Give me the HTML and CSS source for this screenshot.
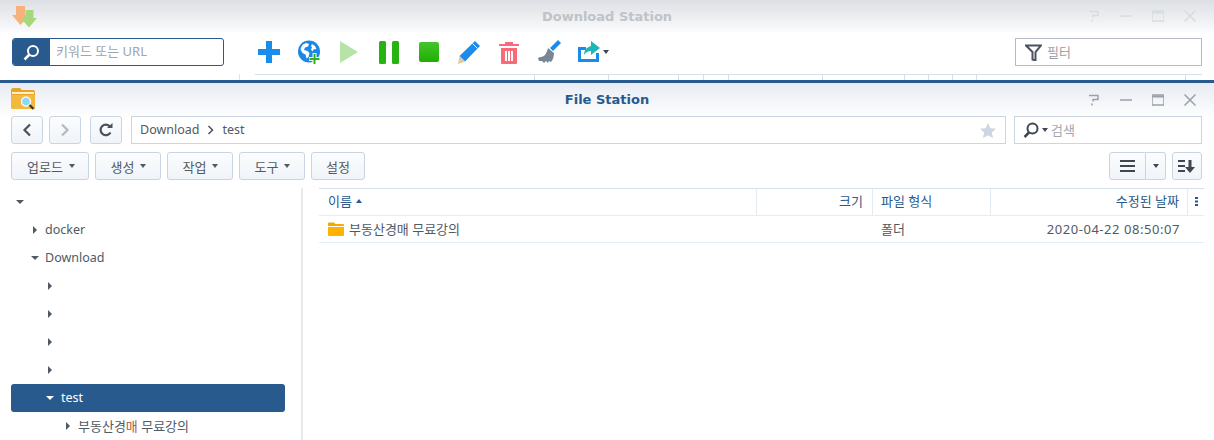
FILE: index.html
```html
<!DOCTYPE html>
<html lang="ko">
<head>
<meta charset="utf-8">
<title>File Station</title>
<link rel="stylesheet" href="styles.css">
</head>
<body>
<section class="ds">
  <header class="titlebar ds-title">
    <svg class="app-icon" width="26" height="23" viewBox="0 0 26 23"><path d="M5 1h9v9h4.500L9.500 20 1 10h4z" fill="#f6b27a"/><path d="M14.500 5h8v8h3.500L18 22.500 9.500 13h5z" fill="#a6d77e"/></svg>
    <span class="title">Download Station</span>
    <div class="winctl faded">
      <svg width="12" height="12" viewBox="0 0 12 12"><path d="M1 1.500h9v4H5v2M4 9.500v2" fill="none" stroke="currentColor" stroke-width="1.500"/></svg>
      <svg width="12" height="12" viewBox="0 0 12 12"><path d="M0 6h12" stroke="currentColor" stroke-width="1.500"/></svg>
      <svg width="12" height="12" viewBox="0 0 12 12"><path d="M0 1h12v10H0z" fill="none" stroke="currentColor" stroke-width="1.500"/><path d="M0 2.500h12" stroke="currentColor" stroke-width="2"/></svg>
      <svg width="12" height="12" viewBox="0 0 12 12"><path d="M.5.500l11 11M11.500.500l-11 11" stroke="currentColor" stroke-width="1.500"/></svg>
    </div>
  </header>
  <div class="ds-toolbar">
    <div class="keyword">
      <span class="keyword-btn">
        <svg width="17" height="17" viewBox="0 0 17 17"><circle cx="10" cy="7" r="5" fill="none" stroke="#fff" stroke-width="2"/><path d="M6.500 10.500L1.500 15.500" stroke="#fff" stroke-width="2.500"/></svg>
      </span>
      <span class="keyword-text">키워드 또는 URL</span>
    </div>
    <div class="tools">
      <span class="tool"><svg width="24" height="24" viewBox="0 0 24 24"><path d="M9 1h6v8h8v6h-8v8H9v-8H1V9h8z" fill="#1a8ceb"/></svg></span>
      <span class="tool"><svg width="24" height="24" viewBox="0 0 24 24"><circle cx="12" cy="11.500" r="11" fill="#1b87e6"/><path d="M6 4.500l3-1.500 3 1-1 2.500-3 1-1 2.500 3.500 1 2 2-1 4-2 1.500-1-4-3-1.500-2-3.500 1-3zM15 4l3 2 1.500 3-3 .5-1 2-1.500-2 1-2-1-1.500z" fill="#fff"/><path d="M15.500 13h4v4h4v4h-4v3h-4v-3h-3.500v-4h3.500z" fill="#fff"/><path d="M16.500 14h2v4h4v2h-4v4h-2v-4h-4v-2h4z" fill="#2fb31a"/></svg></span>
      <span class="tool"><svg width="20" height="24" viewBox="0 0 20 24"><path d="M1 1l18 11L1 23z" fill="#b5e3a8"/></svg></span>
      <span class="tool"><svg width="20" height="23" viewBox="0 0 20 23"><rect x="0" y="0" width="7" height="23" rx="1.500" fill="#26b510"/><rect x="13" y="0" width="7" height="23" rx="1.500" fill="#26b510"/></svg></span>
      <span class="tool"><span class="stop"></span></span>
      <span class="tool"><svg width="24" height="24" viewBox="0 0 24 24"><path d="M18 1l5 5L8 21.500 2.500 16z" fill="#1c8cec"/><path d="M15.500 3.500l5 5" stroke="#fff" stroke-width="1"/><path d="M2.500 16L8 21.500 1 24z" fill="#e0c8a0"/></svg></span>
      <span class="tool"><svg width="20" height="23" viewBox="0 0 20 23"><path d="M0 3h6V1h8v2h6v2H0zM2 7h16v15a1 1 0 0 1-1 1H3a1 1 0 0 1-1-1z" fill="#f96a78"/><path d="M6 10h2v10H6zM9 10h2v10H9zM12 10h2v10h-2z" fill="#fff"/></svg></span>
      <span class="tool"><svg width="24" height="24" viewBox="0 0 24 24"><path d="M21 0l3 3-8 8-3-3z" fill="#1c8cec"/><path d="M11 8l6 5c0 3-1 7-3 9l-2-1-1 2-2-2-2 2-2-2-3 0-1-3 2-1c4 0 6-2 8-9z" fill="#7b8694"/></svg></span>
      <span class="tool"><svg width="24" height="24" viewBox="0 0 24 24"><path d="M1 7h8v3H4v9h15v-6h3v9H1z" fill="#1b8bea"/><path d="M14 1l9 7-9 7v-4c-3 0-5 1-7 4 0-5 3-8 7-9z" fill="#1cb8b8"/></svg><i class="caret dark small"></i></span>
    </div>
    <div class="filter">
      <svg width="17" height="17" viewBox="0 0 17 17"><path d="M1 1.500h15L10.500 8v8.500l-3-1V8z" fill="none" stroke="#4a5260" stroke-width="2"/></svg>
      <span>필터</span>
    </div>
  </div>
  <div class="ds-ticks">
    <span class="tick-stub"></span>
    <div class="ticks">
      <i style="width:280px"></i><i style="width:74px"></i><i style="width:70px"></i><i style="width:25px"></i><i style="width:25px"></i><i style="width:94px"></i><i style="width:82px"></i><i style="width:24px"></i><i style="width:24px"></i><i style="width:24px"></i><i style="width:209px"></i>
    </div>
  </div>
</section>

<section class="fs">
  <header class="titlebar fs-title">
    <svg class="app-icon" width="26" height="23" viewBox="0 0 26 23"><path d="M1 3a2 2 0 0 1 2-2h7l2 2h11a2 2 0 0 1 2 2v16H1z" fill="#e9a526"/><path d="M2 5h22v2H2z" fill="#fbeecb"/><path d="M1 8h24v13a1 1 0 0 1-1 1H2a1 1 0 0 1-1-1z" fill="#f3b93d"/><circle cx="16" cy="14.500" r="4.500" fill="#8bd8f6" stroke="#f6f6f6" stroke-width="1.500"/><path d="M19.500 18l4 4" stroke="#333" stroke-width="2.200"/></svg>
    <span class="title">File Station</span>
    <div class="winctl">
      <svg width="12" height="12" viewBox="0 0 12 12"><path d="M1 1.500h9v4H5v2M4 9.500v2" fill="none" stroke="currentColor" stroke-width="1.500"/></svg>
      <svg width="12" height="12" viewBox="0 0 12 12"><path d="M0 6h12" stroke="currentColor" stroke-width="1.500"/></svg>
      <svg width="12" height="12" viewBox="0 0 12 12"><path d="M0 1h12v10H0z" fill="none" stroke="currentColor" stroke-width="1.500"/><path d="M0 2.500h12" stroke="currentColor" stroke-width="2"/></svg>
      <svg width="12" height="12" viewBox="0 0 12 12"><path d="M.5.500l11 11M11.500.500l-11 11" stroke="currentColor" stroke-width="1.500"/></svg>
    </div>
  </header>

  <div class="navrow">
    <button class="btn square"><svg width="10" height="14" viewBox="0 0 10 14"><path d="M8 1.500L2.500 7 8 12.500" fill="none" stroke="#4a5260" stroke-width="2.200"/></svg></button>
    <button class="btn square"><svg width="10" height="14" viewBox="0 0 10 14"><path d="M2 1.500L7.500 7 2 12.500" fill="none" stroke="#b4bac2" stroke-width="2.200"/></svg></button>
    <button class="btn square refresh"><svg width="14" height="14" viewBox="0 0 14 14"><path d="M11.500 9.500A5.300 5.300 0 1 1 11 3.500" fill="none" stroke="#4a5260" stroke-width="2.200"/><path d="M8 5h5.500V0z" fill="#4a5260"/></svg></button>
    <div class="pathbar">
      <span>Download</span>
      <svg width="7" height="10" viewBox="0 0 7 10"><path d="M1.500 1l4 4-4 4" fill="none" stroke="#4a5260" stroke-width="1.500"/></svg>
      <span>test</span>
      <svg class="star" width="16" height="15" viewBox="0 0 16 15"><path d="M8 0l2.400 5.200 5.600.6-4.200 3.700 1.200 5.500L8 12.200 3 15l1.200-5.500L0 5.800l5.600-.6z" fill="#cdd6e2"/></svg>
    </div>
    <div class="searchbox">
      <svg width="16" height="16" viewBox="0 0 16 16"><circle cx="9.500" cy="6.500" r="5" fill="none" stroke="#3f4753" stroke-width="2"/><path d="M6 10.500L1.500 15" stroke="#3f4753" stroke-width="2.500"/></svg>
      <i class="caret dark small"></i>
      <span>검색</span>
    </div>
  </div>

  <div class="actionrow">
    <button class="btn act w78">업로드<i class="caret small"></i></button>
    <button class="btn act w66">생성<i class="caret small"></i></button>
    <button class="btn act w66">작업<i class="caret small"></i></button>
    <button class="btn act w66">도구<i class="caret small"></i></button>
    <button class="btn act w54">설정</button>
    <div class="splitbtn">
      <button class="btn seg-main"><svg width="15" height="12" viewBox="0 0 15 12"><path d="M0 1h15M0 6h15M0 11h15" stroke="#3f4753" stroke-width="2"/></svg></button>
      <button class="btn seg-caret"><i class="caret dark small"></i></button>
    </div>
    <button class="btn sortbtn"><svg width="18" height="13" viewBox="0 0 18 13"><path d="M0 1h7M0 6h7M0 11h7" stroke="#3f4753" stroke-width="2"/><path d="M10.500 0h3v7H17l-5 6-5-6h3.500z" fill="#3f4753"/></svg></button>
  </div>

  <div class="content">
    <nav class="tree">
      <div class="node lv0"><i class="tri down"></i></div>
      <div class="node lv1"><i class="tri right"></i><span class="latin">docker</span></div>
      <div class="node lv1 open"><i class="tri down"></i><span class="latin">Download</span></div>
      <div class="node lv2"><i class="tri right"></i></div>
      <div class="node lv2"><i class="tri right"></i></div>
      <div class="node lv2"><i class="tri right"></i></div>
      <div class="node lv2"><i class="tri right"></i></div>
      <div class="node lv2 selected"><i class="tri down"></i><span class="latin">test</span></div>
      <div class="node lv3"><i class="tri right"></i><span>부동산경<b class="red">매</b> 무료강의</span></div>
    </nav>
    <div class="grid">
      <div class="grid-head">
        <div class="cell c-name">이름<i class="sort-up"></i></div>
        <div class="cell c-size">크기</div>
        <div class="cell c-type">파일 형식</div>
        <div class="cell c-date">수정된 날짜</div>
        <div class="cell c-more"><svg width="3" height="9" viewBox="0 0 3 9"><path d="M0 0h3v2H0zM0 3.500h3v2H0zM0 7h3v2H0z" fill="#285a8e"/></svg></div>
      </div>
      <div class="grid-row">
        <div class="cell c-name"><svg class="folder" width="16" height="14" viewBox="0 0 16 14"><path d="M0 1.500A1 1 0 0 1 1 .5h5l1.500 1.500H15a1 1 0 0 1 1 1V4H0z" fill="#f7a900"/><path d="M0 5h16v8a1 1 0 0 1-1 1H1a1 1 0 0 1-1-1z" fill="#ffb300"/></svg><span class="up">부동산경매 무료강의</span></div>
        <div class="cell c-size"></div>
        <div class="cell c-type"><span class="up1">폴더</span></div>
        <div class="cell c-date date-value">2020-04-22 08:50:07</div>
        <div class="cell c-more"></div>
      </div>
    </div>
  </div>
</section>
</body>
</html>
```
FILE: styles.css
```css
* { box-sizing: border-box; }
html, body { margin: 0; padding: 0; }
body {
  width: 1214px;
  height: 440px;
  overflow: hidden;
  background: #fff;
  font-family: "Noto Sans", "Noto Sans CJK KR", sans-serif;
  font-size: 13px;
  color: #505a64;
}
button { font: inherit; color: inherit; padding: 0; }
.latin { font-size: 12.500px; }

.titlebar {
  position: relative;
  display: flex;
  align-items: center;
  justify-content: center;
}
.app-icon { position: absolute; left: 11px; }
.title {
  font-family: "DejaVu Sans", sans-serif;
  font-weight: 700;
  font-size: 13px;
}
.winctl {
  position: absolute;
  right: 18px;
  display: flex;
  gap: 20px;
  color: #9ba1a9;
}
.winctl.faded { color: #d9dcdf; }

/* Download Station, inactive window behind */
.ds { height: 80px; overflow: hidden; }
.ds-title {
  height: 32px;
  background: linear-gradient(#dcdfe4, #fbfbfc);
}
.ds-title .title { color: #bfc3c8; }
.ds-title .app-icon { top: 5px; left: 11px; }
.ds-toolbar {
  display: flex;
  align-items: center;
  height: 28px;
  margin-top: 6px;
  padding: 0 12px;
}
.keyword {
  display: flex;
  width: 212px;
  height: 28px;
  border: 1px solid #285a8e;
  border-radius: 3px;
  overflow: hidden;
}
.keyword-btn {
  width: 37px;
  background: #285a8e;
  display: flex;
  align-items: center;
  justify-content: center;
}
.keyword-text { padding-left: 6px; line-height: 24px; color: #a0a5ae; }
.tools { display: flex; margin-left: 25px; }
.tool {
  position: relative;
  width: 40px;
  height: 28px;
  display: flex;
  align-items: center;
  justify-content: center;
}
.stop {
  width: 20px;
  height: 20px;
  border-radius: 2px;
  background: linear-gradient(#44c42c, #1fb000);
}
.tool .caret { position: absolute; left: 34px; top: 12px; }
.filter {
  margin-left: auto;
  width: 187px;
  height: 28px;
  border: 1px solid #b7bbcc;
  display: flex;
  align-items: center;
  gap: 5px;
  padding-left: 9px;
  color: #9aa0a8;
}
.filter span { padding-bottom: 2px; }
.ds-ticks { display: flex; height: 6px; margin-top: 8px; }
.tick-stub {
  width: 240px;
  border-right: 1px solid #e3e3e3;
  flex: none;
}
.ticks {
  display: flex;
  margin-left: 15px;
  width: 947px;
  border-top: 1px solid #d3e0ec;
}
.ticks i { border-right: 1px solid #d3e0ec; flex: none; }

/* File Station */
.fs { border-top: 3px solid #285a8e; }
.fs-title {
  height: 33px;
  background: linear-gradient(#e8ecf2, #fdfdfe);
}
.fs-title .title { color: #285a8e; }
.fs-title .app-icon { top: 4px; left: 10px; }

.navrow, .actionrow {
  display: flex;
  height: 28px;
  padding: 0 12px 0 11px;
}
.actionrow { margin-top: 8px; gap: 6px; }
.btn {
  border: 1px solid #c9d5e2;
  border-radius: 3px;
  background: linear-gradient(#fbfcfd, #f0f4f9);
  display: flex;
  align-items: center;
  justify-content: center;
}
.square { width: 32px; height: 28px; margin-right: 6px; }
.refresh { margin-left: 3px; margin-right: 9px; }
.pathbar {
  width: 875px;
  height: 28px;
  border: 1px solid #ccd5e4;
  display: flex;
  align-items: center;
  gap: 8px;
  padding-left: 8px;
  font-size: 12.500px;
}
.pathbar span { padding-bottom: 1px; }
.star { margin-left: auto; margin-right: 9px; }
.searchbox {
  margin-left: 8px;
  width: 188px;
  height: 28px;
  border: 1px solid #ccd5e4;
  display: flex;
  align-items: center;
  gap: 3px;
  padding-left: 8px;
  color: #a3a8b0;
}
.searchbox span { padding-bottom: 2px; }
.act { height: 28px; gap: 6px; }
.w78 { width: 78px; padding-left: 2px; }
.w66 { width: 66px; padding-left: 1px; }
.w54 { width: 54px; }
.caret {
  display: inline-block;
  width: 0;
  height: 0;
  border-left: 4px solid transparent;
  border-right: 4px solid transparent;
  border-top: 4px solid #505a64;
}
.caret.small {
  border-left-width: 3.500px;
  border-right-width: 3.500px;
}
.caret.dark { border-top-color: #3f4753; }
.splitbtn { display: flex; margin-left: auto; }
.seg-main { width: 37px; height: 28px; border-radius: 3px 0 0 3px; }
.seg-caret { width: 20px; height: 28px; border-left: 0; border-radius: 0 3px 3px 0; }
.sortbtn { width: 30px; height: 28px; }

.content { display: flex; margin-top: 8px; height: 252px; }
.tree {
  width: 303px;
  flex: none;
  border-right: 2px solid #e8e9eb;
}
.node {
  display: flex;
  align-items: center;
  height: 28px;
}
.node span { margin-left: 7px; padding-bottom: 2px; }
.node.open span { margin-left: 6px; }
.lv0 { padding-left: 16px; }
.lv1 { padding-left: 31px; }
.lv2 { padding-left: 46px; }
.lv3 { padding-left: 64px; }
.selected {
  margin: 0 16px 0 11px;
  padding-left: 35px;
  background: #285a8e;
  border-radius: 3px;
  color: #fff;
}
.tri { display: block; width: 0; height: 0; flex: none; }
.tri.down {
  width: 8px;
  border-left: 4px solid transparent;
  border-right: 4px solid transparent;
  border-top: 4px solid #505a64;
}
.selected .tri.down { border-top-color: #fff; }
.tri.right {
  margin-left: 2px;
  margin-right: 1px;
  border-top: 4px solid transparent;
  border-bottom: 4px solid transparent;
  border-left: 4px solid #505a64;
}
.red { font-weight: 400; color: #b5543c; }

.grid { margin-left: 16px; width: 885px; }
.grid-head, .grid-row { display: flex; }
.grid-head {
  height: 28px;
  border-top: 1px solid #d3e0ec;
  border-bottom: 1px solid #e6ecf3;
  color: #285a8e;
  line-height: 22px;
}
.grid-row { height: 27px; border-bottom: 1px solid #e6ecf3; }
.cell {
  display: flex;
  align-items: center;
  padding: 0 9px;
  white-space: nowrap;
}
.grid-head .cell { padding-bottom: 2px; }
.up { padding-bottom: 2px; }
.up1 { padding-bottom: 1px; }
.grid-head .cell:not(.c-more) { border-right: 1px solid #e3ebf3; }
.c-name { width: 438px; }
.c-size { width: 116px; justify-content: flex-end; }
.c-type { width: 118px; padding-left: 8px; }
.c-date { width: 197px; justify-content: flex-end; padding-right: 8px; }
.date-value { letter-spacing: .55px; padding-right: 8px; }
.c-more { width: 16px; padding: 0 0 0 7px; }
.sort-up {
  margin-left: 4px;
  width: 0;
  height: 0;
  border-left: 3.500px solid transparent;
  border-right: 3.500px solid transparent;
  border-bottom: 4px solid #285a8e;
}
.folder { margin-right: 5px; flex: none; }
```
